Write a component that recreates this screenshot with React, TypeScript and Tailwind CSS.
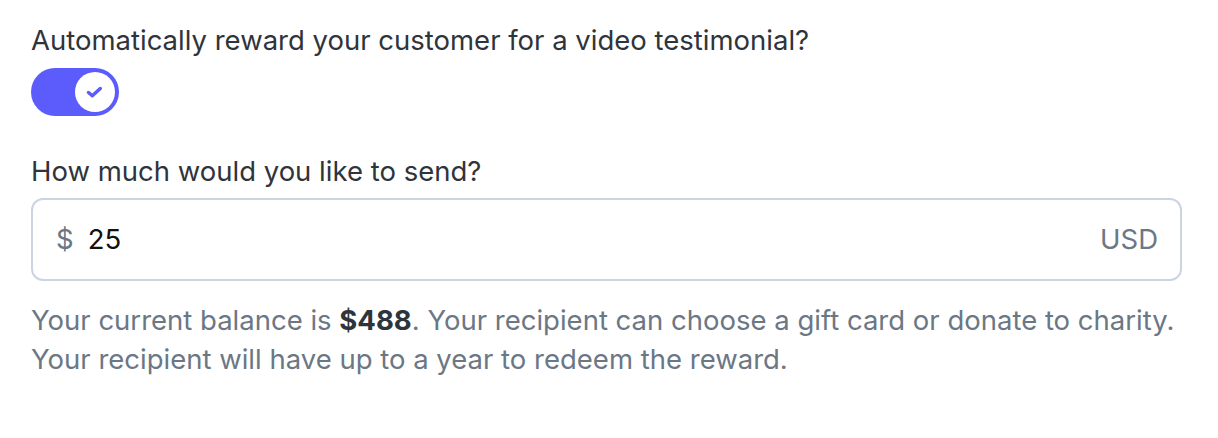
import { useState } from "react";

function Toggle({ on, onChange }: { on: boolean; onChange: (v: boolean) => void }) {
  return (
    <button
      type="button"
      onClick={() => onChange(!on)}
      className={
        on
          ? "flex h-[48px] w-[88px] items-center justify-end rounded-full bg-[#5c5cfc] px-[4px]"
          : "flex h-[48px] w-[88px] items-center justify-start rounded-full bg-[#e2e8f0] px-[4px]"
      }
    >
      <span className="flex h-[40px] w-[40px] items-center justify-center rounded-full bg-white">
        {on && (
          <svg width="20" height="20" viewBox="0 0 20 20" fill="none">
            <path d="M3.5 10.5l3.8 3.3 8-7.3" stroke="#5c5cfc" strokeWidth="3.5" strokeLinecap="round" strokeLinejoin="round" />
          </svg>
        )}
      </span>
    </button>
  );
}

export default function App() {
  const [on, setOn] = useState(true);
  const [amount, setAmount] = useState("25");
  return (
    <div className="min-h-screen bg-white pl-[31px] pr-[36px] pt-[21px] font-['Inter',sans-serif] text-[27.5px] text-[#2f343b]">
      <div className="leading-[38px]">Automatically reward your customer for a video testimonial?</div>
      <div className="mt-[9px]">
        <Toggle on={on} onChange={setOn} />
      </div>
      <div className="mt-[36px] leading-[38px]">How much would you like to send?</div>
      <div className="mt-[8px] flex h-[83px] items-center rounded-[12px] border-2 border-[#cbd5e1] pl-[23px] pr-[22px]">
        <span className="text-[#6b7785]">$</span>
        <input
          value={amount}
          onChange={(e) => setAmount(e.target.value)}
          className="ml-[14px] min-w-0 flex-1 bg-transparent text-[#111] outline-none"
        />
        <span className="text-[#6b7785]">USD</span>
      </div>
      <div className="mt-[20px] leading-[39px] text-[#6b7785]">
        <div>
          Your current balance is <b className="font-bold text-[#2f343b]">$488</b>. Your recipient can choose a gift card or donate to charity.
        </div>
        <div>Your recipient will have up to a year to redeem the reward.</div>
      </div>
    </div>
  );
}
